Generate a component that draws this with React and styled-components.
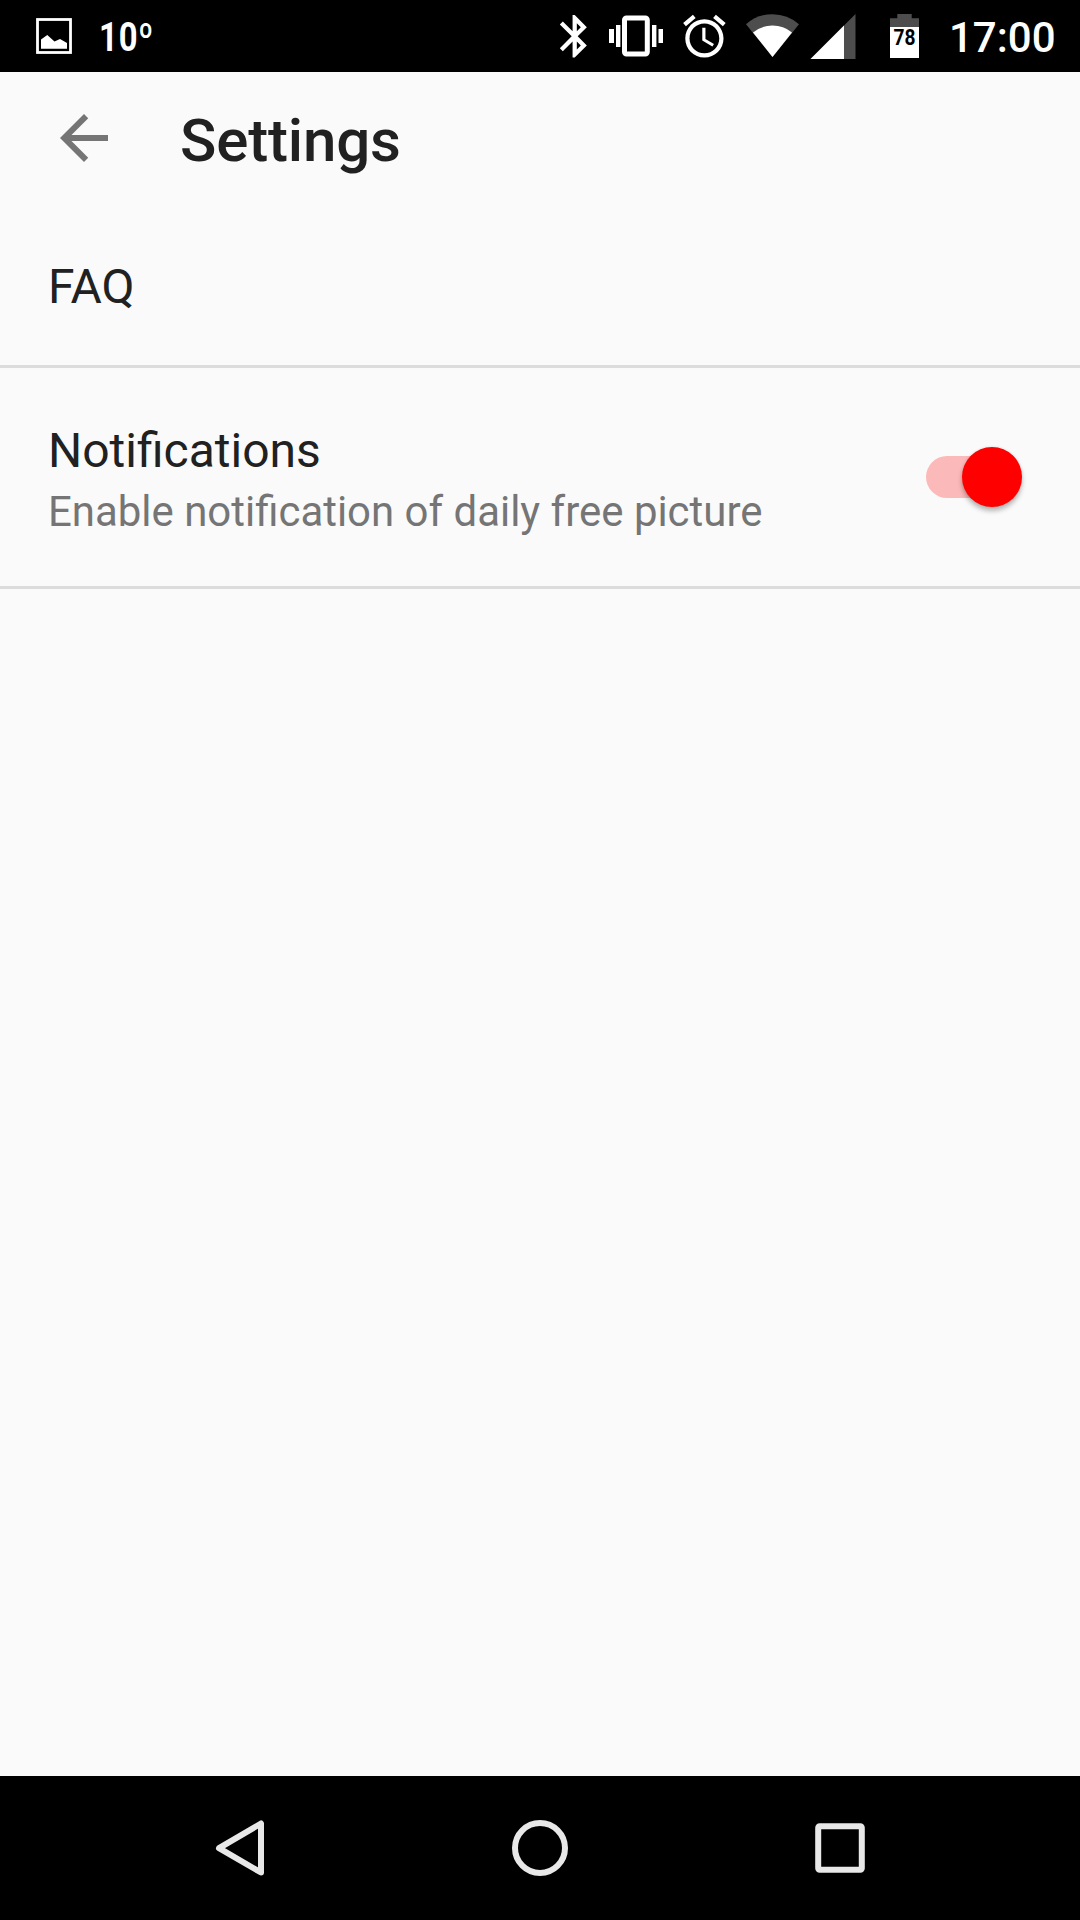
import { useState } from "react";
import styled, { createGlobalStyle } from "styled-components";

const GlobalStyle = createGlobalStyle`
  * {
    box-sizing: border-box;
  }
  body {
    margin: 0;
    background: #000;
    font-family: Roboto, "Noto Sans", sans-serif;
  }
  svg {
    display: block;
    flex-shrink: 0;
  }
`;

const Screen = styled.div`
  display: flex;
  flex-direction: column;
  width: 1080px;
  height: 1920px;
  background: #fafafa;
  overflow: hidden;
`;

const StatusBar = styled.div`
  display: flex;
  justify-content: space-between;
  height: 72px;
  padding: 0 24px 0 36px;
  background: #000;
  color: #fff;
`;

const StatusGroup = styled.div`
  display: flex;
  align-items: center;
`;

const Temperature = styled.span`
  margin: 3px 0 0 27px;
  font-size: 40px;
  font-weight: 700;
  line-height: 48px;
  letter-spacing: 1px;
  transform: scaleX(0.82);
  transform-origin: left;
`;

const Clock = styled.span`
  width: 107px;
  margin: 3px 0 0 30px;
  font-size: 42px;
  font-weight: 500;
  line-height: 50px;
  white-space: nowrap;
`;

const Header = styled.header`
  display: flex;
  align-items: center;
  height: 136px;
  padding: 0 48px 4px;
`;

const BackButton = styled.button`
  width: 72px;
  height: 72px;
  padding: 0;
  border: none;
  background: none;
  color: #757575;
`;

const Title = styled.h1`
  margin: 6px 0 0 60px;
  color: #212121;
  font-size: 60px;
  font-weight: 500;
  line-height: 72px;
  letter-spacing: -0.15px;
`;

const Row = styled.div`
  display: flex;
  align-items: center;
  justify-content: space-between;
  height: ${(props) => props.$height}px;
  padding: 0 58px 0 48px;
  border-bottom: 3px solid #dcdcdc;
`;

const RowText = styled.div`
  display: flex;
  flex-direction: column;
  margin-top: 6px;
`;

const Label = styled.span`
  color: #212121;
  font-size: 48px;
  line-height: 64px;
`;

const Description = styled.span`
  color: #757575;
  font-size: 41.95px;
  line-height: 58px;
`;

const Track = styled.div`
  display: flex;
  align-items: center;
  justify-content: ${(props) => (props.$on ? "flex-end" : "flex-start")};
  width: 96px;
  height: 42px;
  margin-bottom: 1px;
  padding-right: 0.5px;
  border-radius: 21px;
  background: linear-gradient(
    to right,
    ${(props) => (props.$on ? "#fcb9b9" : "#b5b5b5")} 70px,
    transparent 70px
  );
`;

const Thumb = styled.div`
  width: 60px;
  height: 60px;
  border-radius: 50%;
  background: ${(props) => (props.$on ? "#fe0000" : "#f1f1f1")};
  box-shadow: 0 4px 5px rgba(0, 0, 0, 0.27), 0 0 3px rgba(0, 0, 0, 0.1);
`;

const NavBar = styled.nav`
  display: flex;
  align-items: center;
  justify-content: center;
  gap: 240px;
  height: 144px;
  margin-top: auto;
  background: #000;
`;

const NavIcon = styled.svg`
  width: 60px;
  height: 60px;
  fill: none;
  stroke: #e8e8e8;
  stroke-width: 6;
  stroke-linejoin: round;
`;

function StatusIcons() {
  return (
    <svg width="370" height="72" viewBox="549 0 370 72" fill="#fff">
      {/* bluetooth */}
      <path
        transform="translate(549.2 10.8) scale(2.125)"
        d="M17.71 7.71L12 2h-1v7.59L6.41 5 5 6.41 10.59 12 5 17.59 6.41 19 11 14.41V22h1l5.71-5.71-4.3-4.29 4.3-4.29zM13 5.83l1.88 1.88L13 9.59V5.83zm1.88 10.46L13 18.17v-3.76l1.88 1.88z"
      />
      {/* vibrate */}
      <rect x="624.5" y="17.9" width="22.8" height="36.2" rx="2" fill="none" stroke="#fff" strokeWidth="5" />
      <rect x="609" y="29" width="5" height="14" />
      <rect x="616" y="25" width="4.4" height="22" />
      <rect x="652" y="25" width="4.4" height="22" />
      <rect x="658.5" y="29" width="4.5" height="14" />
      {/* alarm */}
      <path
        transform="translate(678.9 10.8) scale(2.125)"
        d="M22 5.72l-4.6-3.86-1.29 1.53 4.6 3.86L22 5.72zM7.88 3.39L6.6 1.86 2 5.71l1.29 1.53 4.59-3.85zM12.5 8H11v6l4.75 2.85.75-1.23-4-2.37V8zM12 4c-4.97 0-9 4.03-9 9s4.02 9 9 9c4.97 0 9-4.03 9-9s-4.03-9-9-9zm0 16c-3.87 0-7-3.13-7-7s3.13-7 7-7 7 3.13 7 7-3.13 7-7 7z"
      />
      {/* wifi */}
      <path fill="#4d4d4d" d="M772.5 57L746 24.2Q757.5 14.2 772.5 14.2T799 24.2Z" />
      <path d="M772.5 57L753 32.4Q761.5 25.5 772.5 25.5T792 32.4Z" />
      {/* signal */}
      <path fill="#4d4d4d" d="M855.5 14V59H810.5Z" />
      <path d="M844 25.5V59H810.5Z" />
      {/* battery */}
      <path fill="#4d4d4d" d="M897.3 14h14.4v4.3h7.3V27h-29v-8.7h7.3z" />
      <rect x="890" y="27" width="29" height="31" />
      <text
        x="904.5"
        y="44.6"
        fill="#000"
        fontSize="22.5"
        fontWeight="700"
        textAnchor="middle"
        textLength="22"
        lengthAdjust="spacingAndGlyphs"
      >
        78
      </text>
    </svg>
  );
}

function App() {
  const [enabled, setEnabled] = useState(true);

  return (
    <Screen>
      <GlobalStyle />
      <StatusBar>
        <StatusGroup>
          <svg width="36" height="36" viewBox="0 0 36 36">
            <rect x="1.5" y="1.5" width="33" height="33" fill="none" stroke="#fff" strokeWidth="2.8" />
            <path fill="#fff" d="M5 30.7V21.5L11.3 17L18.5 23.5L24 21L31 25V30.7Z" />
          </svg>
          <Temperature>10º</Temperature>
        </StatusGroup>
        <StatusGroup>
          <StatusIcons />
          <Clock>17:00</Clock>
        </StatusGroup>
      </StatusBar>
      <Header>
        <BackButton aria-label="Back">
          <svg width="72" height="72" viewBox="0 0 24 24" fill="currentColor">
            <path d="M20 11H7.83l5.59-5.59L12 4l-8 8 8 8 1.41-1.41L7.83 13H20v-2z" />
          </svg>
        </BackButton>
        <Title>Settings</Title>
      </Header>
      <Row $height={160}>
        <Label>FAQ</Label>
      </Row>
      <Row $height={221}>
        <RowText>
          <Label>Notifications</Label>
          <Description>Enable notification of daily free picture</Description>
        </RowText>
        <Track $on={enabled} onClick={() => setEnabled(!enabled)}>
          <Thumb $on={enabled} />
        </Track>
      </Row>
      <NavBar>
        <NavIcon viewBox="0 0 60 60">
          <path d="M9 30.2L51 5.5V54.5Z" />
        </NavIcon>
        <NavIcon viewBox="0 0 60 60">
          <circle cx="30" cy="30" r="25" />
        </NavIcon>
        <NavIcon viewBox="0 0 60 60">
          <rect x="8.2" y="8.2" width="43.6" height="43.6" rx="1.5" />
        </NavIcon>
      </NavBar>
    </Screen>
  );
}

export default App;
